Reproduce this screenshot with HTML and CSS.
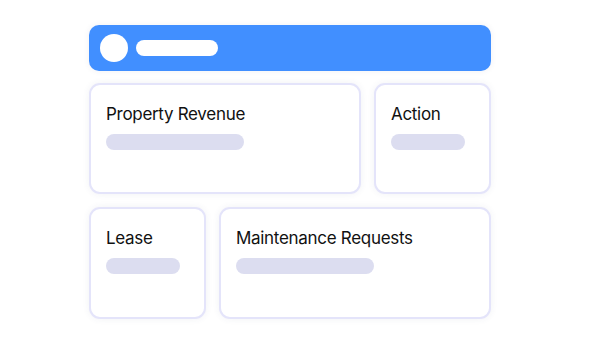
FILE: index.html
```html
<!DOCTYPE html>
<html>
<head>
<meta charset="utf-8">
<link rel="stylesheet" href="styles.css">
</head>
<body>
<div class="board">
  <div class="topbar">
    <span class="avatar"></span>
    <span class="topline"></span>
  </div>
  <div class="row first">
    <div class="card wide">
      <div class="title">Property Revenue</div>
      <div class="bar long"></div>
    </div>
    <div class="card narrow">
      <div class="title">Action</div>
      <div class="bar short"></div>
    </div>
  </div>
  <div class="row second">
    <div class="card narrow">
      <div class="title">Lease</div>
      <div class="bar short"></div>
    </div>
    <div class="card wide">
      <div class="title">Maintenance Requests</div>
      <div class="bar long"></div>
    </div>
  </div>
</div>
</body>
</html>
```
FILE: styles.css
```css
html, body {
  margin: 0;
  padding: 0;
  background: #ffffff;
}
body {
  font-family: Inter, "Open Sans", sans-serif;
  width: 600px;
  height: 344px;
  overflow: hidden;
}
.board {
  display: flex;
  flex-direction: column;
  gap: 12px;
  width: 402px;
  margin: 25px 0 0 89px;
}
.topbar {
  height: 46px;
  background: #418fff;
  border-radius: 10px;
  display: flex;
  align-items: center;
  gap: 8px;
  padding-left: 11px;
  box-sizing: border-box;
  box-shadow: 0 0 6px rgba(60, 70, 120, 0.08);
}
.avatar {
  width: 28px;
  height: 28px;
  border-radius: 50%;
  background: #ffffff;
}
.topline {
  width: 82px;
  height: 16px;
  border-radius: 8px;
  background: #ffffff;
}
.row {
  display: flex;
  gap: 13px;
}
.second {
  margin-top: 1px;
}
.card {
  box-sizing: border-box;
  height: 111px;
  border: 2px solid #e4e4fa;
  border-radius: 11px;
  background: #ffffff;
  padding: 17px 15px 0 15px;
  box-shadow: 0 0 7px rgba(60, 70, 120, 0.07);
}
.second .card { height: 112px; }
.wide { width: 272px; }
.narrow { width: 117px; }
.title {
  font-size: 17px;
  line-height: 24px;
  color: #111111;
  letter-spacing: -0.3px;
}
.bar {
  margin-top: 8px;
  height: 16px;
  border-radius: 8px;
  background: #dcddf0;
}
.long { width: 138px; }
.short { width: 74px; }
```
